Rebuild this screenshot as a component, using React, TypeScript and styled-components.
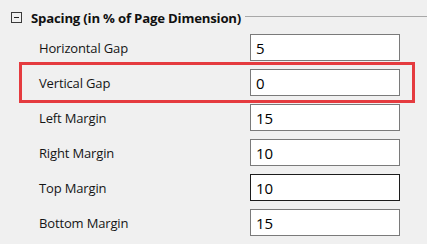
import React from 'react';
import styled, { createGlobalStyle } from 'styled-components';

const GlobalStyle = createGlobalStyle`
  html, body {
    margin: 0;
    padding: 0;
    background: #f0f0f0;
    overflow: hidden;
  }
  body {
    font-family: 'Open Sans', 'Noto Sans', sans-serif;
    color: #111;
  }
`;

const Panel = styled.div`
  width: 427px;
  height: 244px;
  background: #f0f0f0;
  overflow: hidden;
`;

const GroupHeader = styled.div`
  box-sizing: border-box;
  display: flex;
  align-items: center;
  height: 30px;
  padding: 5px 0 0 11px;
`;

const Toggle = styled.span`
  box-sizing: border-box;
  width: 11px;
  height: 11px;
  border: 1px solid #3a3a3a;
  display: flex;
  align-items: center;
  justify-content: center;

  &::after {
    content: '';
    width: 5px;
    height: 1px;
    background: #222;
  }
`;

const GroupTitle = styled.span`
  margin-left: 9px;
  font-size: 13.2px;
  font-weight: 700;
  letter-spacing: -0.2px;
  color: #111;
  white-space: nowrap;
`;

const Rule = styled.span`
  flex: 1;
  height: 1px;
  background: #a8a8a8;
  margin-left: 4px;
  margin-top: -3px;
`;

const Rows = styled.div`
  display: flex;
  flex-direction: column;
  padding-left: 22px;
  width: 390px;
`;

const Row = styled.div<{ $marked?: boolean }>`
  display: flex;
  align-items: center;
  height: 35px;
  outline: ${(p) => (p.$marked ? '3px solid #e53b3f' : 'none')};
`;

const Label = styled.label`
  width: 211px;
  padding-left: 17px;
  font-size: 13px;
  letter-spacing: -0.15px;
  color: #151515;
`;

const Field = styled.input<{ $focused?: boolean }>`
  box-sizing: border-box;
  width: 150px;
  height: 27px;
  margin: 0;
  padding: 0 0 0 5px;
  border: 1px solid ${(p) => (p.$focused ? '#1c1c1c' : '#7a7a7a')};
  background: #fff;
  font-family: 'Open Sans', 'Noto Sans', sans-serif;
  font-size: 15px;
  color: #000;
  outline: none;
`;

const fields = [
  { label: 'Horizontal Gap', value: '5' },
  { label: 'Vertical Gap', value: '0', marked: true },
  { label: 'Left Margin', value: '15' },
  { label: 'Right Margin', value: '10' },
  { label: 'Top Margin', value: '10', focused: true },
  { label: 'Bottom Margin', value: '15' },
];

export default function App() {
  return (
    <Panel>
      <GlobalStyle />
      <GroupHeader>
        <Toggle />
        <GroupTitle>Spacing (in % of Page Dimension)</GroupTitle>
        <Rule />
      </GroupHeader>
      <Rows>
        {fields.map((f) => (
          <Row key={f.label} $marked={f.marked}>
            <Label>{f.label}</Label>
            <Field defaultValue={f.value} $focused={f.focused} readOnly />
          </Row>
        ))}
      </Rows>
    </Panel>
  );
}
